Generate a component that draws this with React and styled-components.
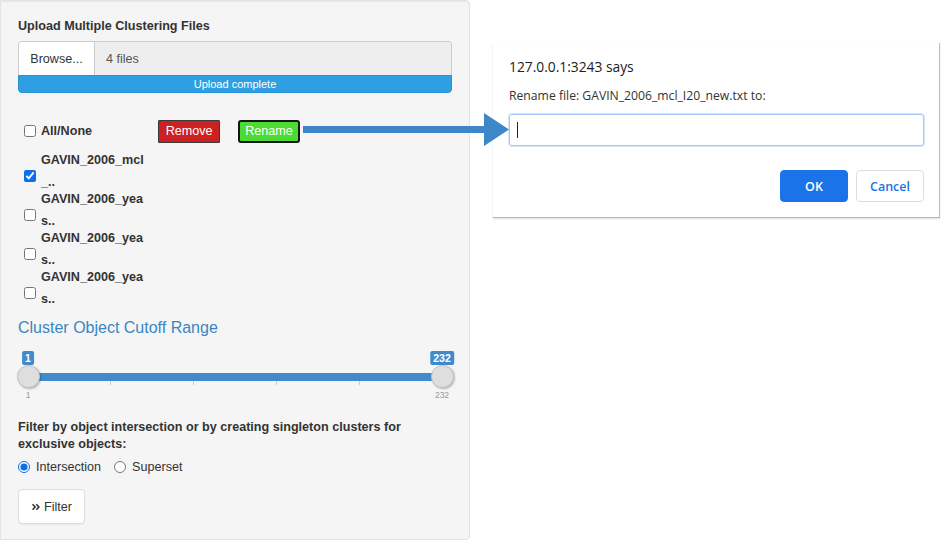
import React from "react";
import styled, { createGlobalStyle } from "styled-components";
import { FaAngleDoubleRight } from "react-icons/fa";

const Global = createGlobalStyle`
  html, body { margin: 0; padding: 0; background: #fff; }
  body { font-family: "Liberation Sans", Arial, sans-serif; color: #333; }
  * { box-sizing: border-box; }
`;

const Page = styled.div`
  position: relative;
  width: 941px;
  height: 540px;
  display: flex;
  overflow: hidden;
`;

const Well = styled.div`
  width: 470px;
  height: 540px;
  flex: none;
  background: #f5f5f5;
  border: 1px solid #e3e3e3;
  border-radius: 0 4px 4px 0;
  box-shadow: inset 0 1px 1px rgba(0, 0, 0, 0.05);
  padding: 15px 17px 0 17px;
  display: flex;
  flex-direction: column;
`;

const FieldLabel = styled.div`
  font-weight: bold;
  font-size: 12.6px;
  line-height: 20px;
  color: #333;
  margin-bottom: ${(p) => p.$mb || 0}px;
`;

const FileRow = styled.div`
  display: flex;
  height: 34px;
  border: 1px solid #ccc;
  border-bottom: none;
  border-radius: 4px 4px 0 0;
  overflow: hidden;
`;

const BrowseBtn = styled.div`
  width: 76px;
  background: #fff;
  border-right: 1px solid #ccc;
  display: flex;
  align-items: center;
  justify-content: center;
  font-size: 12.6px;
  color: #333;
`;

const FileName = styled.div`
  flex: 1;
  background: #eee;
  display: flex;
  align-items: center;
  padding-left: 11px;
  font-size: 12.6px;
  color: #555;
`;

const Progress = styled.div`
  height: 18px;
  background: #2d9fe2;
  border-radius: 0 0 4px 4px;
  color: #fff;
  font-size: 11px;
  line-height: 16px;
  text-align: center;
  border: 1px solid #2893d4;
`;

const ControlRow = styled.div`
  display: flex;
  align-items: center;
  height: 22px;
  margin-top: 27px;
  padding-left: 6px;
`;

const Check = styled.input.attrs({ type: "checkbox" })`
  width: 12px;
  height: 12px;
  margin: 0;
  accent-color: #0a6fe8;
  flex: none;
`;

const CheckText = styled.span`
  font-weight: bold;
  font-size: 12.6px;
  margin-left: 5px;
  color: #333;
`;

const ActionBtn = styled.button`
  height: 23px;
  width: 62px;
  padding: 0;
  font-family: "Liberation Sans", Arial, sans-serif;
  font-size: 12.6px;
  color: #fff;
  background: ${(p) => p.$bg};
  border: ${(p) => p.$border};
  border-radius: ${(p) => p.$radius}px;
  margin-left: ${(p) => p.$ml}px;
  flex: none;
`;

const FileList = styled.div`
  margin-top: 7px;
  display: flex;
  flex-direction: column;
`;

const FileItem = styled.label`
  display: flex;
  align-items: flex-end;
  padding-left: 6px;
  & + & { margin-top: -5px; }
  input { margin-bottom: 11px; }
`;

const FileText = styled.span`
  display: flex;
  flex-direction: column;
  font-weight: bold;
  font-size: 12.6px;
  line-height: 22px;
  margin-left: 5px;
  color: #333;
`;

const SectionTitle = styled.div`
  font-size: 16px;
  line-height: 20px;
  color: #3a86c2;
  margin-top: 8px;
`;

const Slider = styled.div`
  position: relative;
  height: 62px;
  margin-top: 13px;
`;

const Track = styled.div`
  position: absolute;
  left: 10px;
  right: 9px;
  top: 22px;
  height: 8px;
  background: #428bca;
  border-radius: 1px;
`;

const Tick = styled.div`
  position: absolute;
  top: 30px;
  width: 1px;
  height: 4px;
  background: #ccc;
`;

const Handle = styled.div`
  position: absolute;
  top: 14px;
  width: 23px;
  height: 23px;
  margin-left: -11px;
  border-radius: 50%;
  background: #dedede;
  border: 1px solid #c2c2c2;
  box-shadow: 1px 1px 2px rgba(0, 0, 0, 0.25);
`;

const ValueTag = styled.div`
  position: absolute;
  top: 0;
  transform: translateX(-50%);
  background: #428bca;
  color: #fff;
  font-size: 10.5px;
  font-weight: bold;
  line-height: 14px;
  padding: 0 3px;
  border-radius: 2px;
`;

const GridLabel = styled.div`
  position: absolute;
  top: 39px;
  transform: translateX(-50%);
  font-size: 8.5px;
  color: #999;
`;

const FilterLabel = styled.div`
  font-weight: bold;
  font-size: 12.6px;
  line-height: 17px;
  color: #333;
  margin-top: 6px;
  max-width: 425px;
`;

const RadioRow = styled.div`
  display: flex;
  align-items: center;
  margin-top: 4px;
  height: 20px;
`;

const Radio = styled.input.attrs({ type: "radio" })`
  width: 12px;
  height: 12px;
  margin: 0 0 0 ${(p) => p.$ml || 0}px;
  accent-color: #0a6fe8;
`;

const RadioText = styled.span`
  font-size: 12.6px;
  color: #333;
  margin-left: 6px;
`;

const FilterBtn = styled.button`
  margin-top: 12px;
  width: 67px;
  height: 35px;
  background: #fff;
  border: 1px solid #ddd;
  border-radius: 4px;
  font-family: "Liberation Sans", Arial, sans-serif;
  font-size: 12.6px;
  color: #333;
  display: flex;
  align-items: center;
  justify-content: center;
  gap: 3px;
  padding: 0;
  box-shadow: 0 1px 1px rgba(0, 0, 0, 0.05);
`;

const RightArea = styled.div`
  flex: 1;
  padding: 43px 0 0 23px;
`;

const Dialog = styled.div`
  width: 447px;
  background: #fff;
  border-right: 1px solid #bdbdbd;
  border-bottom: 1px solid #b5b5b5;
  box-shadow: 0 1px 2px rgba(0, 0, 0, 0.12);
  padding: 14px 15px 15px 16px;
  font-family: "Open Sans", "Noto Sans", sans-serif;
`;

const DialogTitle = styled.div`
  font-size: 13.8px;
  line-height: 20px;
  color: #202124;
`;

const DialogMsg = styled.div`
  font-size: 12.2px;
  line-height: 18px;
  color: #333;
  margin-top: 10px;
`;

const PromptInput = styled.div`
  margin-top: 9px;
  height: 32px;
  border: 1px solid #a9c8f5;
  border-radius: 3px;
  box-shadow: 0 0 0 1px #d7e6fb;
  display: flex;
  align-items: center;
  padding-left: 7px;
`;

const Caret = styled.div`
  width: 1px;
  height: 16px;
  background: #222;
`;

const ButtonRow = styled.div`
  display: flex;
  justify-content: flex-end;
  gap: 8px;
  margin-top: 24px;
`;

const DialogBtn = styled.button`
  width: 68px;
  height: 32px;
  border-radius: 4px;
  font-family: "Open Sans", "Noto Sans", sans-serif;
  font-size: 12.5px;
  font-weight: 600;
  padding: 0;
  background: ${(p) => (p.$primary ? "#1a73e8" : "#fff")};
  color: ${(p) => (p.$primary ? "#fff" : "#1a73e8")};
  border: 1px solid ${(p) => (p.$primary ? "#1a73e8" : "#dadce0")};
`;

const ArrowSvg = styled.svg`
  position: absolute;
  left: 303px;
  top: 113px;
`;

const ticks = [110, 193, 276, 359];

export default function App() {
  return (
    <Page>
      <Global />
      <Well>
        <FieldLabel $mb={5}>Upload Multiple Clustering Files</FieldLabel>
        <FileRow>
          <BrowseBtn>Browse...</BrowseBtn>
          <FileName>4 files</FileName>
        </FileRow>
        <Progress>Upload complete</Progress>

        <ControlRow>
          <Check />
          <CheckText>All/None</CheckText>
          <ActionBtn $bg="#cc2121" $border="1px solid #3a3a3a" $radius={1} $ml={66}>
            Remove
          </ActionBtn>
          <ActionBtn $bg="#4cdb34" $border="2px solid #151515" $radius={3} $ml={18}>
            Rename
          </ActionBtn>
        </ControlRow>

        <FileList>
          <FileItem>
            <Check defaultChecked />
            <FileText>
              <span>GAVIN_2006_mcl</span>
              <span>_..</span>
            </FileText>
          </FileItem>
          {[0, 1, 2].map((i) => (
            <FileItem key={i}>
              <Check />
              <FileText>
                <span>GAVIN_2006_yea</span>
                <span>s..</span>
              </FileText>
            </FileItem>
          ))}
        </FileList>

        <SectionTitle>Cluster Object Cutoff Range</SectionTitle>
        <Slider>
          <Track />
          {ticks.map((x) => (
            <Tick key={x} style={{ left: x - 18 }} />
          ))}
          <ValueTag style={{ left: 10 }}>1</ValueTag>
          <ValueTag style={{ left: 424 }}>232</ValueTag>
          <Handle style={{ left: 10 }} />
          <Handle style={{ left: 424 }} />
          <GridLabel style={{ left: 10 }}>1</GridLabel>
          <GridLabel style={{ left: 424 }}>232</GridLabel>
        </Slider>

        <FilterLabel>
          Filter by object intersection or by creating singleton clusters for exclusive objects:
        </FilterLabel>
        <RadioRow>
          <Radio name="mode" defaultChecked />
          <RadioText>Intersection</RadioText>
          <Radio name="mode" $ml={13} />
          <RadioText>Superset</RadioText>
        </RadioRow>
        <FilterBtn>
          <FaAngleDoubleRight size={10} />
          Filter
        </FilterBtn>
      </Well>

      <RightArea>
        <Dialog>
          <DialogTitle>127.0.0.1:3243 says</DialogTitle>
          <DialogMsg>Rename file: GAVIN_2006_mcl_I20_new.txt to:</DialogMsg>
          <PromptInput>
            <Caret />
          </PromptInput>
          <ButtonRow>
            <DialogBtn $primary>OK</DialogBtn>
            <DialogBtn>Cancel</DialogBtn>
          </ButtonRow>
        </Dialog>
      </RightArea>

      <ArrowSvg width="206" height="33" viewBox="0 0 206 33">
        <path d="M0 13 H181 V0 L206 16.5 L181 33 V20 H0 Z" fill="#3d87c8" />
      </ArrowSvg>
    </Page>
  );
}
